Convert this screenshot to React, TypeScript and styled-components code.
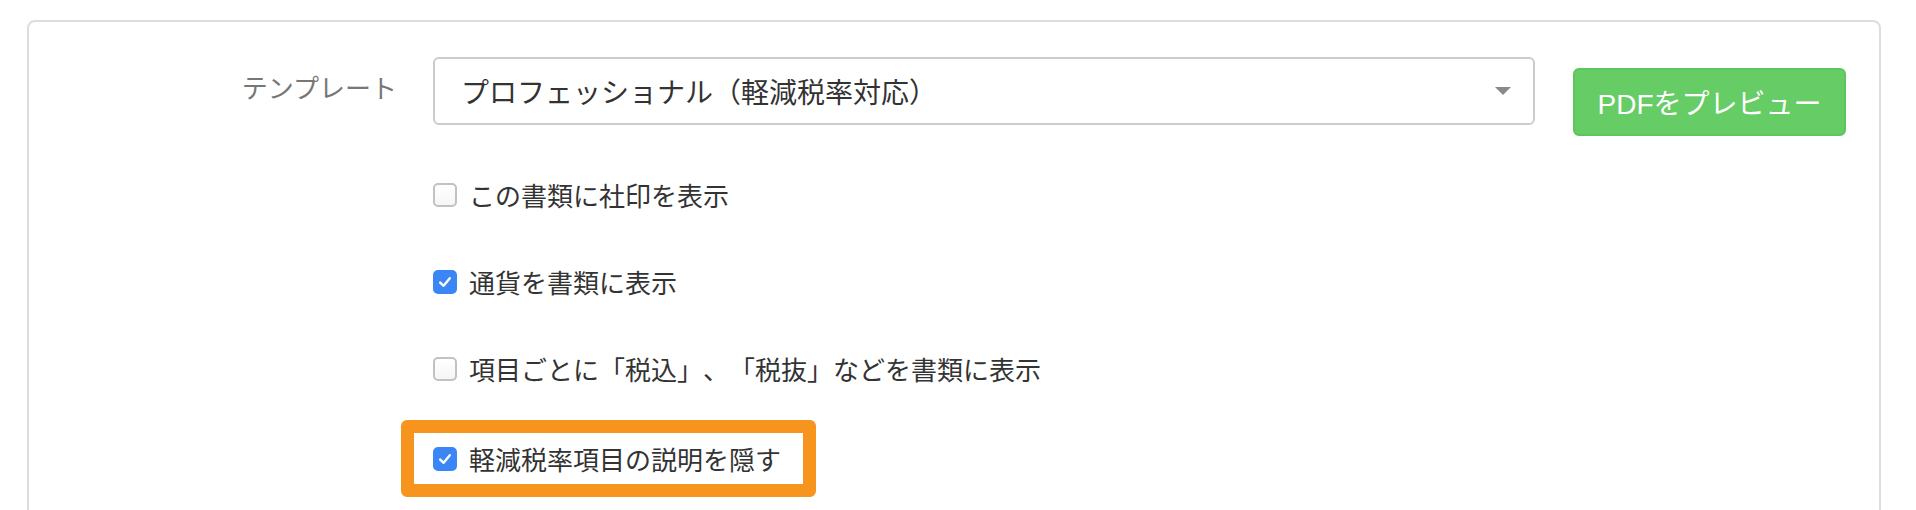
import React from 'react';
import styled, { createGlobalStyle } from 'styled-components';

const GlobalStyle = createGlobalStyle`
  html, body {
    margin: 0;
    padding: 0;
    background: #ffffff;
    overflow: hidden;
  }

  body {
    font-family: 'Liberation Sans', 'Noto Sans CJK JP', sans-serif;
    color: #333333;
    text-spacing-trim: space-all;
  }
`;

type OptionItem = { label: string; checked: boolean };

const options: OptionItem[] = [
  { label: 'この書類に社印を表示', checked: false },
  { label: '通貨を書類に表示', checked: true },
  { label: '項目ごとに「税込」、「税抜」などを書類に表示', checked: false },
];

const CheckMark: React.FC = () => (
  <svg width="16" height="16" viewBox="0 0 16 16" fill="none">
    <path d="M3.2 8.6 L6.6 11.8 L12.8 4.2" stroke="#ffffff" strokeWidth="2.4" strokeLinecap="round" strokeLinejoin="round" />
  </svg>
);

const Option: React.FC<OptionItem> = ({ label, checked }) => (
  <OptionRow>
    <Checkbox checked={checked}>{checked && <CheckMark />}</Checkbox>
    <OptionLabel>{label}</OptionLabel>
  </OptionRow>
);

export default function App() {
  return (
    <>
      <GlobalStyle />
      <Card>
        <FormRow>
          <FieldLabel>テンプレート</FieldLabel>
          <FieldBody>
            <Select>
              <SelectValue>プロフェッショナル（軽減税率対応）</SelectValue>
              <svg width="16" height="8" viewBox="0 0 16 8">
                <path d="M0 0 H16 L8 8 Z" fill="#8a8a8a" />
              </svg>
            </Select>
            <OptionList>
              {options.map((option) => (
                <Option key={option.label} {...option} />
              ))}
              <Highlight>
                <Option label="軽減税率項目の説明を隠す" checked />
              </Highlight>
            </OptionList>
          </FieldBody>
          <PreviewButton>PDFをプレビュー</PreviewButton>
        </FormRow>
      </Card>
    </>
  );
}

const Card = styled.div`
  margin: 20px 35px 0 27px;
  padding: 35px 0 60px;

  border: 2px solid #dddddd;
  border-radius: 8px;
`;

const FormRow = styled.div`
  display: flex;
  align-items: flex-start;
`;

const FieldLabel = styled.div`
  box-sizing: border-box;
  width: 404px;
  padding: 10px 36px 0 0;

  text-align: right;
  font-family: 'Noto Sans CJK JP', sans-serif;
  font-size: 26px;
  line-height: 40px;
  color: #777777;
`;

const FieldBody = styled.div`
  display: flex;
  flex-direction: column;
  width: 1102px;
`;

const Select = styled.div`
  box-sizing: border-box;
  display: flex;
  align-items: center;
  justify-content: space-between;
  height: 68px;
  padding: 0 22px 0 26px;

  border: 2px solid #cccccc;
  border-radius: 6px;
  background: #ffffff;
`;

const SelectValue = styled.span`
  font-family: 'Noto Sans CJK JP', sans-serif;
  font-size: 28px;
  line-height: 40px;
  color: #333333;
`;

const OptionList = styled.div`
  display: flex;
  flex-direction: column;
  align-items: flex-start;
  gap: 47px;
  padding-top: 50px;
`;

const OptionRow = styled.label`
  display: flex;
  align-items: center;
  gap: 12px;
  height: 40px;
`;

const Checkbox = styled.span<{ checked: boolean }>`
  box-sizing: border-box;
  display: inline-flex;
  align-items: center;
  justify-content: center;
  flex-shrink: 0;
  width: 24px;
  height: 24px;

  border: 2px solid ${({ checked }) => (checked ? '#3a86f7' : '#c2c2c2')};
  border-radius: 5px;
  background: ${({ checked }) => (checked ? '#3a86f7' : 'linear-gradient(#ffffff, #f6f6f6)')};
`;

const OptionLabel = styled.span`
  font-family: 'Noto Sans CJK JP', sans-serif;
  font-size: 26px;
  line-height: 40px;
  color: #333333;
`;

const Highlight = styled.div`
  display: flex;
  align-items: center;
  height: 51px;
  margin: -16px 0 0 -32px;
  padding: 0 22px 0 19px;

  border: 13px solid #f7941d;
  border-radius: 6px;
  background: #ffffff;
`;

const PreviewButton = styled.button`
  box-sizing: border-box;
  width: 273px;
  height: 68px;
  margin: 11px 0 0 38px;
  padding: 0;

  border: 2px solid #5cc55c;
  border-radius: 6px;
  background: #66cc66;

  font-family: 'Liberation Sans', 'Noto Sans CJK JP', sans-serif;
  font-size: 28px;
  color: #ffffff;
  cursor: pointer;
`;
